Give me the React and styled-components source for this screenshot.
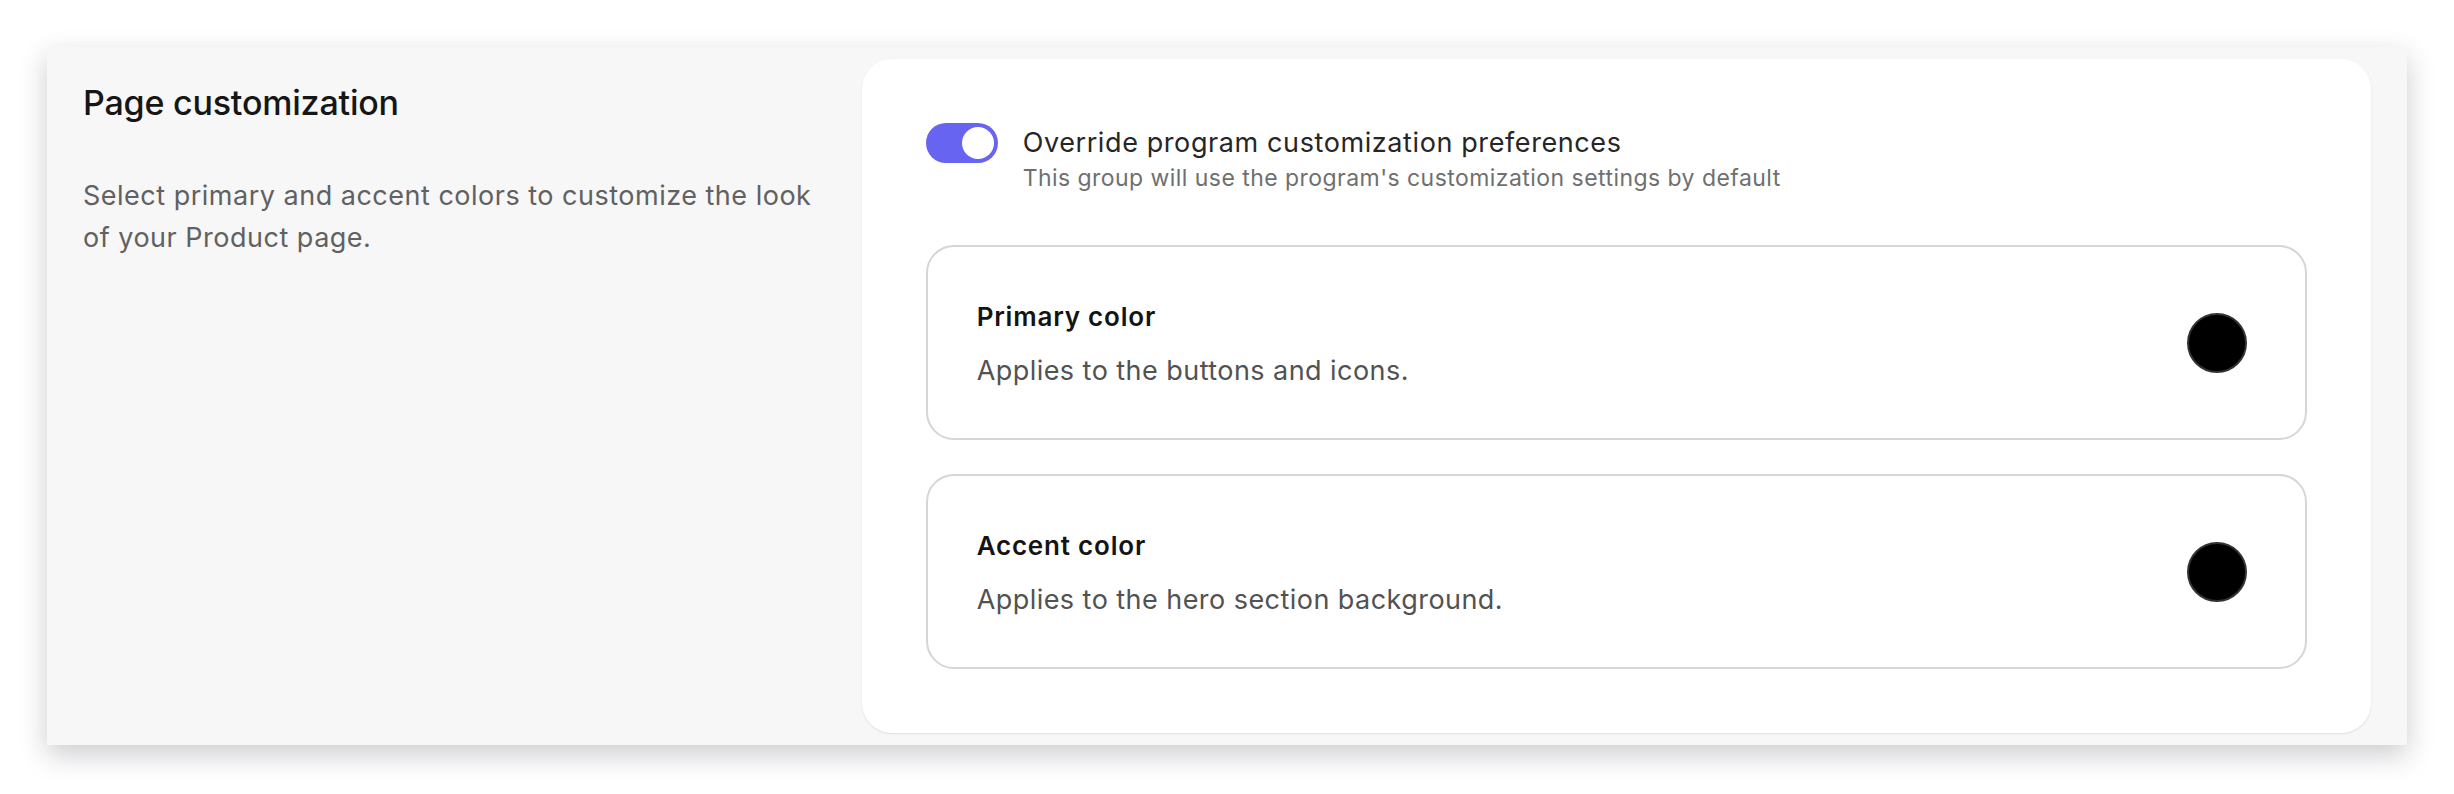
import React, { useState } from 'react';
import styled, { createGlobalStyle } from 'styled-components';

const GlobalStyle = createGlobalStyle`
  html,
  body {
    margin: 0;
    padding: 0;
    background: #ffffff;
  }

  body {
    font-family: Inter, 'Noto Sans', 'Liberation Sans', sans-serif;
    -webkit-font-smoothing: antialiased;
  }

  * {
    box-sizing: border-box;
  }
`;

const Page = styled.div`
  padding: 47px 47px 46px;
`;

const Panel = styled.section`
  display: grid;
  grid-template-columns: 1fr 2fr;
  column-gap: 24px;
  padding: 12px 36px;
  background-color: #f7f7f7;
  box-shadow: 0 10px 26px rgba(24, 26, 40, 0.22);
`;

const Intro = styled.div`
  padding: 24px 20px 0 0;
`;

const Heading = styled.h2`
  margin: 0;
  font-size: 34px;
  line-height: 40px;
  font-weight: 500;
  letter-spacing: -0.2px;
  color: #161616;
`;

const Blurb = styled.p`
  margin: 52px 0 0;
  font-size: 27px;
  line-height: 42px;
  font-weight: 400;
  letter-spacing: 0.5px;
  color: #616161;
`;

const Sheet = styled.div`
  display: flex;
  flex-direction: column;
  padding: 64px;
  background-color: #ffffff;
  border-radius: 30px;
  box-shadow: 0 1px 2px rgba(0, 0, 0, 0.1);
`;

const OverrideRow = styled.div`
  display: flex;
  align-items: flex-start;
  gap: 25px;
  margin-bottom: 51px;
`;

const SwitchTrack = styled.button`
  flex: none;
  display: flex;
  align-items: center;
  justify-content: ${(props) => (props.on ? 'flex-end' : 'flex-start')};
  width: 72px;
  height: 40px;
  padding: 4px;
  border: none;
  border-radius: 20px;
  background-color: ${(props) => (props.on ? '#6764f1' : '#d4d4d8')};
  cursor: pointer;
`;

const SwitchKnob = styled.span`
  display: block;
  width: 32px;
  height: 32px;
  border-radius: 50%;
  background-color: #ffffff;
`;

const OverrideText = styled.div`
  display: flex;
  flex-direction: column;
`;

const OverrideLabel = styled.span`
  font-size: 27px;
  line-height: 40px;
  font-weight: 400;
  letter-spacing: 0.6px;
  color: #262626;
`;

const OverrideHint = styled.span`
  font-size: 23px;
  line-height: 31px;
  letter-spacing: 0.45px;
  color: #6f6f6f;
`;

const ColorList = styled.div`
  display: flex;
  flex-direction: column;
  gap: 34px;
`;

const ColorCard = styled.div`
  display: flex;
  align-items: center;
  justify-content: space-between;
  height: 195px;
  padding: 0 58px 0 49px;
  border: 2px solid #d6d6d6;
  border-radius: 28px;
`;

const ColorInfo = styled.div`
  display: flex;
  flex-direction: column;
  gap: 20px;
  padding-top: 4px;
`;

const ColorTitle = styled.span`
  font-size: 26px;
  line-height: 32px;
  font-weight: 600;
  letter-spacing: 0.8px;
  color: #141414;
`;

const ColorDesc = styled.span`
  font-size: 27px;
  line-height: 36px;
  letter-spacing: 0.45px;
  color: #525252;
`;

const Swatch = styled.span`
  flex: none;
  width: 60px;
  height: 60px;
  border-radius: 50%;
  background-color: ${(props) => props.colour};
  border: 2px solid #333333;
`;

const colourSettings = [
  {
    id: 'primary',
    title: 'Primary color',
    desc: 'Applies to the buttons and icons.',
    value: '#000000',
  },
  {
    id: 'accent',
    title: 'Accent color',
    desc: 'Applies to the hero section background.',
    value: '#000000',
  },
];

const App = () => {
  const [override, setOverride] = useState(true);

  return (
    <>
      <GlobalStyle />
      <Page>
        <Panel>
          <Intro>
            <Heading>Page customization</Heading>
            <Blurb>
              Select primary and accent colors to customize the look of your
              Product page.
            </Blurb>
          </Intro>
          <Sheet>
            <OverrideRow>
              <SwitchTrack
                type="button"
                on={override ? 1 : 0}
                aria-pressed={override}
                onClick={() => setOverride(!override)}
              >
                <SwitchKnob />
              </SwitchTrack>
              <OverrideText>
                <OverrideLabel>Override program customization preferences</OverrideLabel>
                <OverrideHint>
                  This group will use the program's customization settings by default
                </OverrideHint>
              </OverrideText>
            </OverrideRow>
            <ColorList>
              {colourSettings.map((item) => (
                <ColorCard key={item.id}>
                  <ColorInfo>
                    <ColorTitle>{item.title}</ColorTitle>
                    <ColorDesc>{item.desc}</ColorDesc>
                  </ColorInfo>
                  <Swatch colour={item.value} />
                </ColorCard>
              ))}
            </ColorList>
          </Sheet>
        </Panel>
      </Page>
    </>
  );
};

export default App;
